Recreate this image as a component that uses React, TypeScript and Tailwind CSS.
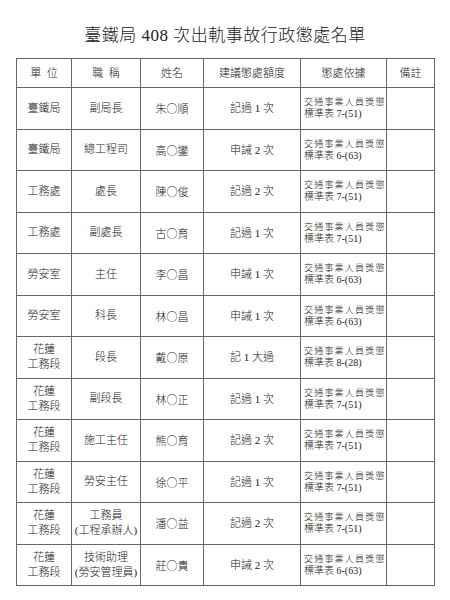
const rows: { unit: string[]; title: string[]; name: string; penalty: string; basis: string }[] = [
  { unit: ["臺鐵局"], title: ["副局長"], name: "朱○順", penalty: "記過 1 次", basis: "標準表 7-(51)" },
  { unit: ["臺鐵局"], title: ["總工程司"], name: "高○鑾", penalty: "申誡 2 次", basis: "標準表 6-(63)" },
  { unit: ["工務處"], title: ["處長"], name: "陳○俊", penalty: "記過 2 次", basis: "標準表 7-(51)" },
  { unit: ["工務處"], title: ["副處長"], name: "古○育", penalty: "記過 1 次", basis: "標準表 7-(51)" },
  { unit: ["勞安室"], title: ["主任"], name: "李○昌", penalty: "申誡 1 次", basis: "標準表 6-(63)" },
  { unit: ["勞安室"], title: ["科長"], name: "林○昌", penalty: "申誡 1 次", basis: "標準表 6-(63)" },
  { unit: ["花蓮", "工務段"], title: ["段長"], name: "戴○原", penalty: "記 1 大過", basis: "標準表 8-(28)" },
  { unit: ["花蓮", "工務段"], title: ["副段長"], name: "林○正", penalty: "記過 1 次", basis: "標準表 7-(51)" },
  { unit: ["花蓮", "工務段"], title: ["施工主任"], name: "熊○育", penalty: "記過 2 次", basis: "標準表 7-(51)" },
  { unit: ["花蓮", "工務段"], title: ["勞安主任"], name: "徐○平", penalty: "記過 1 次", basis: "標準表 7-(51)" },
  { unit: ["花蓮", "工務段"], title: ["工務員", "(工程承辦人)"], name: "潘○益", penalty: "記過 2 次", basis: "標準表 7-(51)" },
  { unit: ["花蓮", "工務段"], title: ["技術助理", "(勞安管理員)"], name: "莊○貴", penalty: "申誡 2 次", basis: "標準表 6-(63)" },
];

const font = { fontFamily: '"Liberation Serif", "Noto Sans CJK TC", serif' };
const cjk = { fontFamily: '"Noto Sans CJK TC", serif' };

function Lines({ lines }: { lines: string[] }) {
  return (
    <div className="flex flex-col items-center leading-[15px]">
      {lines.map((l) => (
        <span key={l}>{l}</span>
      ))}
    </div>
  );
}

export default function App() {
  return (
    <div className="h-[600px] w-[450px] bg-white font-light text-[#222]" style={font}>
      <h1 className="pt-[24px] pb-[10px] text-center text-[17px] leading-[24px] tracking-[0.5px]">
        臺鐵局 408 次出軌事故行政懲處名單
      </h1>
      <table className="ml-[16px] w-[418px] table-fixed border-collapse border border-[#555] text-[11px]">
        <colgroup>
          <col className="w-[55px]" />
          <col className="w-[69px]" />
          <col className="w-[63px]" />
          <col className="w-[97px]" />
          <col className="w-[86px]" />
          <col className="w-[48px]" />
        </colgroup>
        <thead>
          <tr className="h-[29px]">
            <th className="border border-[#666] font-light">單&nbsp;&nbsp;位</th>
            <th className="border border-[#666] font-light">職&nbsp;&nbsp;稱</th>
            <th className="border border-[#666] font-light">姓名</th>
            <th className="border border-[#666] font-light">建議懲處額度</th>
            <th className="border border-[#666] font-light">懲處依據</th>
            <th className="border border-[#666] font-light">備註</th>
          </tr>
        </thead>
        <tbody>
          {rows.map((r, i) => (
            <tr key={i} className="h-[41.5px]">
              <td className="border border-[#666] text-center">
                <Lines lines={r.unit} />
              </td>
              <td className="border border-[#666] text-center">
                <Lines lines={r.title} />
              </td>
              <td className="border border-[#666] text-center" style={cjk}>
                {r.name}
              </td>
              <td className="border border-[#666] text-center">{r.penalty}</td>
              <td className="border border-[#666] pl-[3px] text-[9px] leading-[12px]">
                <div className="tracking-[1.2px]">交通事業人員獎懲</div>
                <div className="text-[10px]">{r.basis}</div>
              </td>
              <td className="border border-[#666]"></td>
            </tr>
          ))}
        </tbody>
      </table>
    </div>
  );
}
